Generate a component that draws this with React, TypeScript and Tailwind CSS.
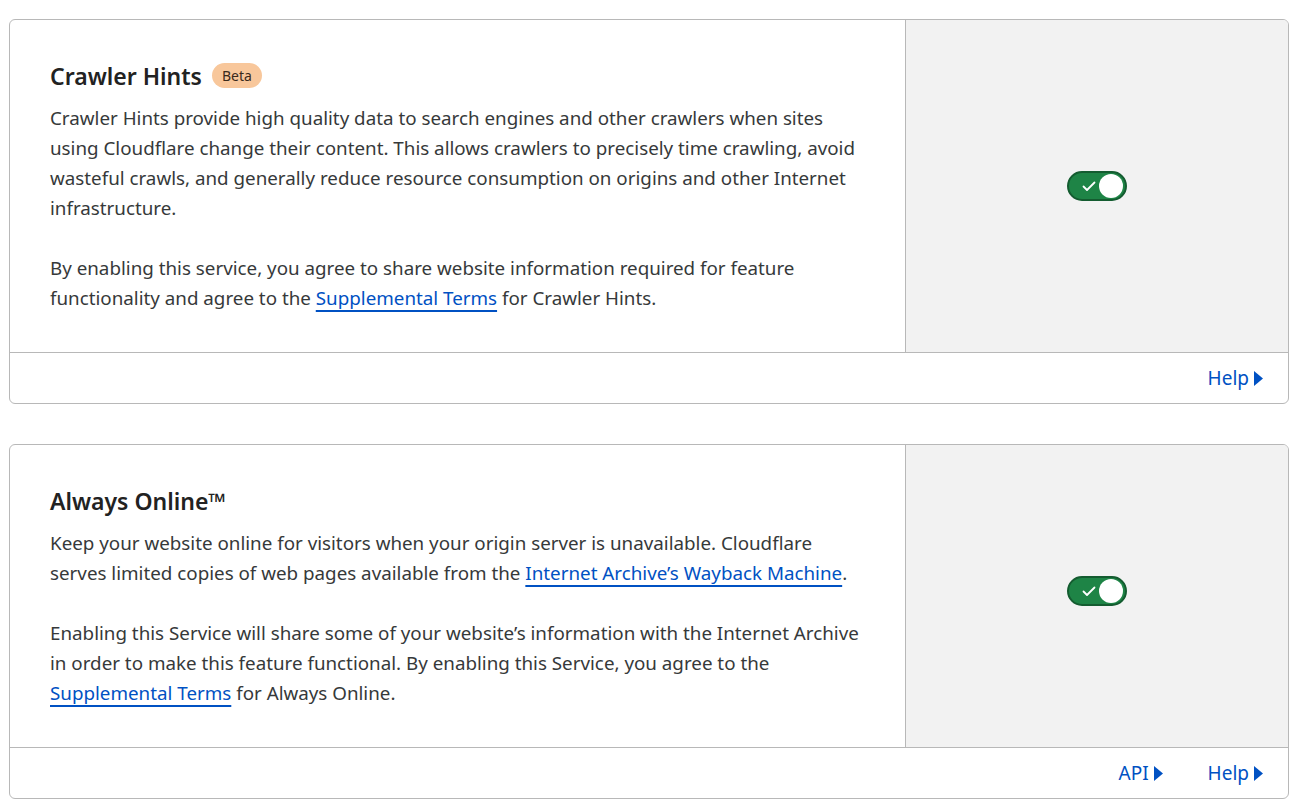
import React from "react";

const Toggle = () => (
  <div className="relative w-[60px] h-[30px] rounded-full bg-[#1e8446] border-2 border-[#145c30]">
    <svg className="absolute left-[13px] top-[8px]" width="14" height="11" viewBox="0 0 14 11" fill="none">
      <path d="M1.5 5.5 L5 9 L12.5 1.5" stroke="white" strokeWidth="1.8" strokeLinecap="round" strokeLinejoin="round" />
    </svg>
    <div className="absolute right-[2px] top-[1px] w-[24px] h-[24px] rounded-full bg-white" />
  </div>
);

const Arrow = () => (
  <svg width="11" height="17" viewBox="0 0 11 17" className="ml-[4px]">
    <path d="M1 1 L10 8.5 L1 16 Z" fill="#0051c3" />
  </svg>
);

const FooterLink = ({ label }: { label: string }) => (
  <a className="flex items-center text-[#0051c3] text-[19px] leading-[24px] cursor-pointer">
    {label}
    <Arrow />
  </a>
);

const Link = ({ children }: { children: React.ReactNode }) => (
  <a className="text-[#0051c3] underline decoration-2 underline-offset-[5px] decoration-[#0051c3] cursor-pointer">
    {children}
  </a>
);

const Card = ({
  title,
  badge,
  children,
  links,
  raised,
}: {
  title: string;
  badge?: string;
  children: React.ReactNode;
  links: string[];
  raised?: boolean;
}) => (
  <div className="border border-[#b8b8b8] rounded-[6px] bg-white overflow-hidden">
    <div className="flex">
      <div className="w-[70%] pt-[40px] pb-[39px] pl-[40px] pr-[20px]">
        <div className="flex items-center mb-[11px] h-[32px]">
          <h2 className="text-[23px] leading-[32px] font-semibold text-[#222]">{title}</h2>
          {badge && (
            <span className="ml-[10px] px-[10px] h-[25px] flex items-center rounded-full bg-[#f8c79b] text-[#3a2a1c] text-[14px] mt-[-1px]">
              {badge}
            </span>
          )}
        </div>
        <div className="text-[18.8px] leading-[30px] text-[#36393a] flex flex-col gap-[30px] whitespace-nowrap">
          {children}
        </div>
      </div>
      <div className="w-[30%] bg-[#f2f2f2] border-l border-[#b8b8b8] flex items-center justify-center">
        <div className={raised ? "mb-[10px]" : ""}>
          <Toggle />
        </div>
      </div>
    </div>
    <div className="border-t border-[#b8b8b8] h-[51px] flex items-center justify-end pr-[24px] gap-[44px]">
      {links.map((l) => (
        <FooterLink key={l} label={l} />
      ))}
    </div>
  </div>
);

export default function App() {
  return (
    <div
      className="min-h-screen bg-white px-[9px] pt-[19px] flex flex-col gap-[40px]"
      style={{ fontFamily: '"Noto Sans", "Open Sans", sans-serif' }}
    >
      <Card title="Crawler Hints" badge="Beta" links={["Help"]}>
        <p>
          Crawler Hints provide high quality data to search engines and other crawlers when sites
          <br />
          using Cloudflare change their content. This allows crawlers to precisely time crawling, avoid
          <br />
          wasteful crawls, and generally reduce resource consumption on origins and other Internet
          <br />
          infrastructure.
        </p>
        <p>
          By enabling this service, you agree to share website information required for feature
          <br />
          functionality and agree to the <Link>Supplemental Terms</Link> for Crawler Hints.
        </p>
      </Card>
      <Card title="Always Online™" links={["API", "Help"]} raised>
        <p>
          Keep your website online for visitors when your origin server is unavailable. Cloudflare
          <br />
          serves limited copies of web pages available from the <Link>Internet Archive’s Wayback Machine</Link>.
        </p>
        <p>
          Enabling this Service will share some of your website’s information with the Internet Archive
          <br />
          in order to make this feature functional. By enabling this Service, you agree to the
          <br />
          <Link>Supplemental Terms</Link> for Always Online.
        </p>
      </Card>
    </div>
  );
}
